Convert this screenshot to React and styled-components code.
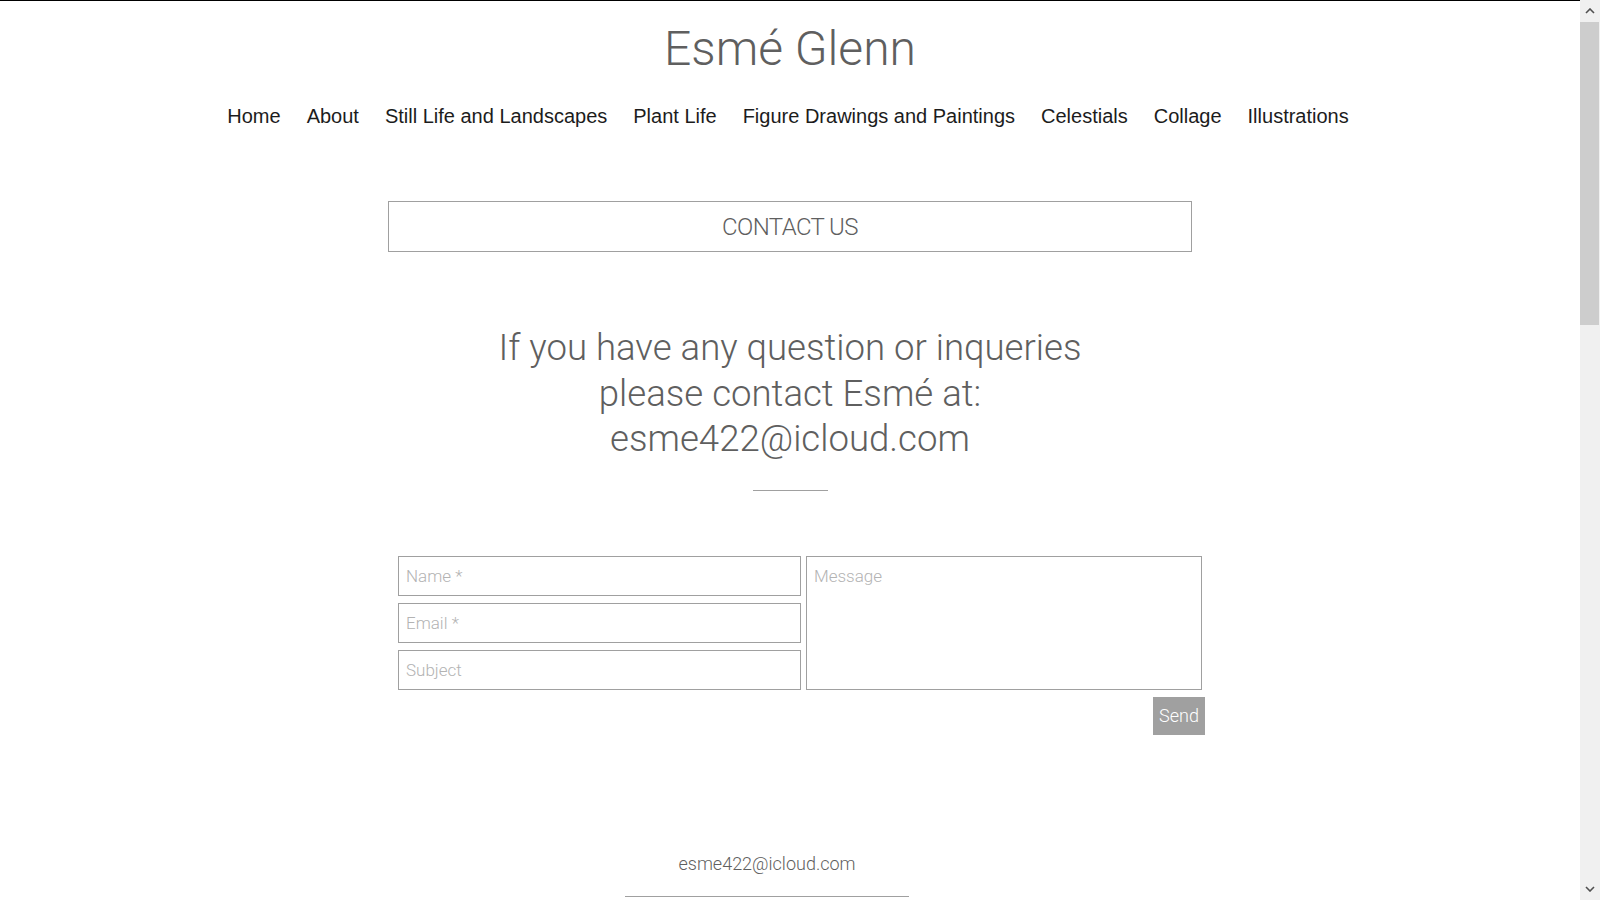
import React from "react";
import styled, { createGlobalStyle } from "styled-components";

const GlobalStyle = createGlobalStyle`
  html, body {
    margin: 0;
    padding: 0;
    background: #ffffff;
  }
  body {
    font-family: "Roboto", "Liberation Sans", sans-serif;
  }
`;

const Shell = styled.div`
  display: flex;
  align-items: flex-start;
`;

const Page = styled.div`
  flex: 1;
  border-top: 1px solid #000;
  min-height: 2550px;
  display: flex;
  flex-direction: column;
  align-items: center;
  color: #5f5f5f;
`;

/* window scrollbar, drawn since the page is photographed without one */
const ScrollRail = styled.aside`
  position: sticky;
  top: 0;
  width: 20px;
  height: 100vh;
  background: #f0f0f0;
  display: flex;
  flex-direction: column;
`;

const RailButton = styled.div`
  height: 22px;
  display: flex;
  align-items: center;
  justify-content: center;
  flex: none;
`;

const RailTrack = styled.div`
  flex: 1;
  display: flex;
  flex-direction: column;
`;

const RailThumb = styled.div`
  height: 303px;
  margin-right: 1px;
  background: #cdcdcd;
`;

const Title = styled.h1`
  margin: 19px 0 0;
  font-family: "Roboto", sans-serif;
  font-weight: 300;
  font-size: 48px;
  line-height: 58px;
  color: #5f5f5f;
`;

const Nav = styled.nav`
  margin-top: 27px;
  display: flex;
  gap: 26px;
  margin-right: 4px;
`;

const NavLink = styled.a`
  font-family: "Liberation Sans", Arial, sans-serif;
  font-size: 20px;
  line-height: 23px;
  color: #1c1c1c;
  text-decoration: none;
  cursor: pointer;
`;

const Banner = styled.div`
  margin-top: 73px;
  width: 802px;
  height: 49px;
  border: 1px solid #a0a0a0;
  display: flex;
  align-items: center;
  justify-content: center;
  font-family: "Roboto", sans-serif;
  font-weight: 300;
  font-size: 24px;
  letter-spacing: -0.6px;
  color: #5f5f5f;
`;

const Lead = styled.p`
  margin: 73px 0 0;
  text-align: center;
  font-family: "Roboto", sans-serif;
  font-weight: 300;
  font-size: 36.6px;
  line-height: 45.5px;
  color: #5f5f5f;
`;

const Divider = styled.hr`
  margin: 28px 0 0;
  width: 75px;
  border: none;
  border-top: 1px solid #a0a0a0;
`;

const Form = styled.form`
  margin-top: 65px;
  align-self: flex-start;
  margin-left: calc(50% - 392px);
  width: 807px;
  display: flex;
  flex-direction: column;
`;

const Fields = styled.div`
  display: grid;
  grid-template-columns: 403px 396px;
  gap: 5px;
`;

const Column = styled.div`
  display: flex;
  flex-direction: column;
  gap: 7px;
`;

const fieldStyle = `
  box-sizing: border-box;
  border: 1px solid #a0a0a0;
  background: #fff;
  font-family: "Roboto", sans-serif;
  font-weight: 300;
  font-size: 17px;
  color: #5f5f5f;
  padding: 0 7px;
  outline: none;
  &::placeholder {
    color: #b3b3b3;
  }
`;

const Input = styled.input`
  ${fieldStyle}
  height: 40px;
  width: 100%;
`;

const TextArea = styled.textarea`
  ${fieldStyle}
  height: 134px;
  width: 100%;
  resize: none;
  padding-top: 9px;
  line-height: 20px;
`;

const SendButton = styled.button`
  margin-top: 7px;
  align-self: flex-end;
  width: 52px;
  height: 38px;
  border: none;
  background: #a0a0a0;
  color: #fff;
  font-family: "Roboto", sans-serif;
  font-weight: 300;
  font-size: 18px;
  padding: 0;
  cursor: pointer;
`;

const Footer = styled.footer`
  margin-top: 118px;
  align-self: flex-start;
  margin-left: calc(50% - 165px);
  width: 284px;
  display: flex;
  flex-direction: column;
  align-items: center;
`;

const FooterMail = styled.a`
  font-family: "Roboto", sans-serif;
  font-weight: 300;
  font-size: 18px;
  line-height: 22px;
  color: #5f5f5f;
  text-decoration: none;
`;

const FooterRule = styled.div`
  margin-top: 21px;
  width: 100%;
  border-top: 1px solid #a0a0a0;
`;

const Chevron = ({ up }) => (
  <svg width="10" height="6" viewBox="0 0 10 6">
    <polyline
      points={up ? "1,5 5,1 9,5" : "1,1 5,5 9,1"}
      fill="none"
      stroke="#505050"
      strokeWidth="1.6"
    />
  </svg>
);

const links = [
  "Home",
  "About",
  "Still Life and Landscapes",
  "Plant Life",
  "Figure Drawings and Paintings",
  "Celestials",
  "Collage",
  "Illustrations",
];

export default function App() {
  return (
    <>
      <GlobalStyle />
      <Shell>
        <Page>
          <Title>Esmé Glenn</Title>
          <Nav>
            {links.map((l) => (
              <NavLink key={l}>{l}</NavLink>
            ))}
          </Nav>
          <Banner>CONTACT US</Banner>
          <Lead>
            If you have any question or inqueries
            <br />
            please contact Esmé at:
            <br />
            esme422@icloud.com
          </Lead>
          <Divider />
          <Form onSubmit={(e) => e.preventDefault()}>
            <Fields>
              <Column>
                <Input placeholder="Name *" />
                <Input placeholder="Email *" />
                <Input placeholder="Subject" />
              </Column>
              <TextArea placeholder="Message" />
            </Fields>
            <SendButton type="submit">Send</SendButton>
          </Form>
          <Footer>
            <FooterMail>esme422@icloud.com</FooterMail>
            <FooterRule />
          </Footer>
        </Page>
        <ScrollRail>
          <RailButton>
            <Chevron up />
          </RailButton>
          <RailTrack>
            <RailThumb />
          </RailTrack>
          <RailButton>
            <Chevron />
          </RailButton>
        </ScrollRail>
      </Shell>
    </>
  );
}
